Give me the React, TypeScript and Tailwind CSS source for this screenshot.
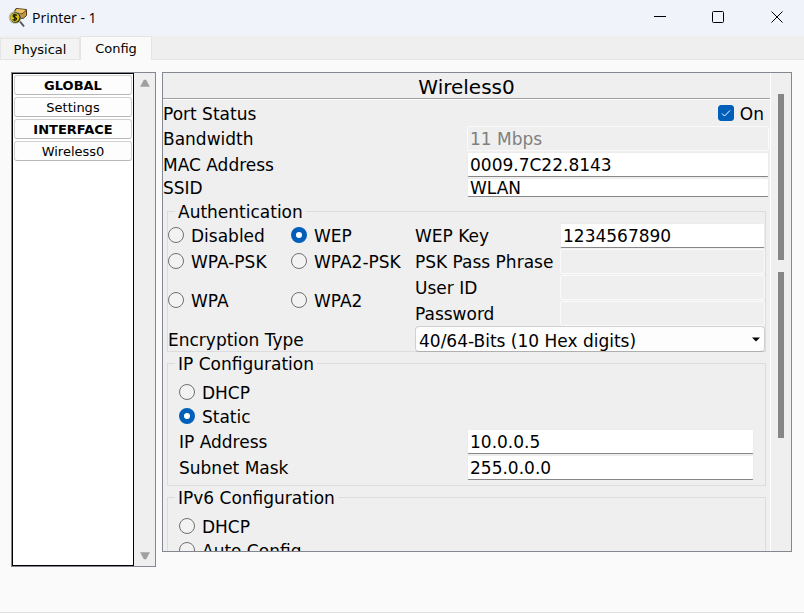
import { useState } from "react";
import type { InputHTMLAttributes, ReactNode } from "react";

const inputBase = "mt-px w-full min-w-0 rounded-[2px] border pl-[2px] outline-none";

function TextBox({ className = "h-[25px] pt-[3px]", ...props }: InputHTMLAttributes<HTMLInputElement>) {
  return (
    <input
      type="text"
      className={`${inputBase} border-[#ececec] border-b-[#868686] bg-white disabled:border-[#fafafa] disabled:bg-[#efefef] disabled:text-[#808080] ${className}`}
      {...props}
    />
  );
}

function FieldLabel({ htmlFor, className = "", children }: { htmlFor: string; className?: string; children: ReactNode }) {
  return (
    <label htmlFor={htmlFor} className={`pt-[2px] leading-[22px] ${className}`}>
      {children}
    </label>
  );
}

function Radio({ name, label, checked, onSelect }: { name: string; label: string; checked: boolean; onSelect: () => void }) {
  return (
    <label className="flex h-6 items-center gap-[7px] whitespace-nowrap">
      <input
        type="radio"
        name={name}
        checked={checked}
        onChange={onSelect}
        className="size-4 shrink-0 appearance-none rounded-full border border-[#707070] bg-[#f3f3f3] checked:border-[5px] checked:border-[#005fb8] checked:bg-white"
      />
      <span className="pt-[3px] leading-[21px]">{label}</span>
    </label>
  );
}

function Group({ title, children }: { title: string; children: ReactNode }) {
  return (
    <fieldset className="mx-1 min-w-0 border border-[#dcdcdc]">
      <legend className="ml-[7px] h-[22px] px-[3px] leading-[24px]">{title}</legend>
      {children}
    </fieldset>
  );
}

function AppIcon() {
  return (
    <svg width="20" height="21" viewBox="0 0 20 21" aria-hidden="true">
      <path d="M6 5 L8 1.500 L18.500 2.500 L18.500 8.500 L15 11.500 L9 11 Z" fill="#c9963e" stroke="#4a3c1c" strokeWidth="1" />
      <path d="M8.500 2 L18 3 L14 6.500 L8 5 Z" fill="#f0c566" />
      <path d="M8 5.500 L14 7 L18 3.500" fill="none" stroke="#6f4a18" strokeWidth="1" />
      <path d="M12 14.500 L16 19.500" stroke="#55564f" strokeWidth="2" />
      <circle cx="7" cy="10.500" r="6.300" fill="#b4c0b4" />
      <circle cx="7.500" cy="10.500" r="5.200" fill="#282c08" />
      <circle cx="6.800" cy="10.500" r="4.600" fill="#dcc012" />
      <path d="M8.800 8.500 C7.300 7 4.800 7.500 5.100 9.200 C5.300 10.500 8.800 10.200 8.600 12 C8.300 13.500 5.800 13.500 4.600 12.300 M6.800 6.800 V14.200" fill="none" stroke="#171700" strokeWidth="1.200" />
    </svg>
  );
}

const sections = [
  { label: "GLOBAL", header: true },
  { label: "Settings", header: false },
  { label: "INTERFACE", header: true },
  { label: "Wireless0", header: false },
];

export default function App() {
  const [auth, setAuth] = useState("WEP");
  const [ip, setIp] = useState("Static");
  const [ipv6, setIpv6] = useState("");

  const authRadio = (label: string) => (
    <Radio name="auth" label={label} checked={auth === label} onSelect={() => setAuth(label)} />
  );

  return (
    <div className="flex h-screen flex-col overflow-hidden border-b border-[#e0e0e0] bg-[#fafafa] font-['DejaVu_Sans',Verdana,sans-serif] text-black">
      <header className="flex h-9 shrink-0 items-center bg-[#f0f3f9] pb-[2px] pl-2">
        <AppIcon />
        <h1 className="ml-1 flex-1 font-['Open_Sans',sans-serif] text-[14px]">Printer - 1</h1>
        <button aria-label="Minimize" className="flex h-[34px] w-[58px] items-center justify-center">
          <svg width="12" height="12"><path d="M0 5.500H12" stroke="#000" /></svg>
        </button>
        <button aria-label="Maximize" className="flex h-[34px] w-[58px] items-center justify-center">
          <svg width="12" height="12"><rect x=".5" y=".5" width="11" height="11" rx="1" fill="none" stroke="#000" /></svg>
        </button>
        <button aria-label="Close" className="mr-[-3px] flex h-[34px] w-[60px] items-center justify-center">
          <svg width="12" height="12"><path d="M.5 .5L11.500 11.500M11.500 .5L.5 11.500" stroke="#000" /></svg>
        </button>
      </header>

      <nav className="flex h-6 shrink-0 items-end bg-[#efefef] text-[13px]">
        <button className="h-[22px] w-20 border border-[#e5e5e5] bg-[#f3f3f3] pt-px">Physical</button>
        <button className="h-6 w-[72px] border border-b-0 border-[#e5e5e5] bg-[#fafafa]">Config</button>
        <div className="h-full flex-1 border-b border-[#e5e5e5]" />
      </nav>

      <main className="flex min-h-0 flex-1 gap-[6px] pt-3 pr-3 pb-[45px] pl-[11px]">
        <aside className="flex w-[145px] shrink-0 border border-[#828790]">
          <div className="flex flex-1 flex-col gap-[2px] border border-black bg-white px-px pt-px text-[13px]">
            {sections.map((s) => (
              <button
                key={s.label}
                className={`h-5 rounded-[3px] border border-[#d0d0d0] border-b-[#b8b8b8] bg-[#fdfdfd] pt-px leading-[18px] ${s.header ? "font-bold" : ""}`}
              >
                {s.label}
              </button>
            ))}
          </div>
          <div className="flex w-[21px] flex-col items-center justify-between bg-[#efefef] py-[6px]">
            <svg width="10" height="8"><path d="M4 1H6L9.500 7.500H.5Z" fill="#a0a0a0" stroke="#a0a0a0" strokeWidth=".5" /></svg>
            <svg width="10" height="8"><path d="M4 7H6L9.500 .5H.5Z" fill="#a0a0a0" stroke="#a0a0a0" strokeWidth=".5" /></svg>
          </div>
        </aside>

        <section className="mb-[15px] flex min-w-0 flex-1 overflow-hidden border border-[#828790] bg-[#efefef] text-[17px]">
          <div className="min-w-0 flex-1">
            <h2 className="h-[27px] border-b border-white text-center text-[20px]">
              <span className="block h-[26px] border-b border-[#a0a0a0] leading-[28px]">Wireless0</span>
            </h2>

            <div className="flex h-[25px] items-center justify-between pr-[6px]">
              <FieldLabel htmlFor="port">Port Status</FieldLabel>
              <span className="flex items-center gap-[6px]">
                <span className="relative flex">
                  <input id="port" type="checkbox" defaultChecked className="peer size-4 appearance-none rounded-[3px] border border-[#707070] checked:border-[#005fb8] checked:bg-[#005fb8]" />
                  <svg width="16" height="16" className="pointer-events-none absolute inset-0 hidden peer-checked:block">
                    <path d="M4 8.500L6.500 11L12 5.500" fill="none" stroke="#fff" />
                  </svg>
                </span>
                <FieldLabel htmlFor="port">On</FieldLabel>
              </span>
            </div>

            <div className="grid grid-cols-[304px_1fr] grid-rows-[26px_26px_20px] items-center pr-px pb-[3px]">
              <FieldLabel htmlFor="bandwidth">Bandwidth</FieldLabel>
              <TextBox id="bandwidth" defaultValue="11 Mbps" disabled />
              <FieldLabel htmlFor="mac">MAC Address</FieldLabel>
              <TextBox id="mac" defaultValue="0009.7C22.8143" />
              <FieldLabel htmlFor="ssid">SSID</FieldLabel>
              <TextBox id="ssid" defaultValue="WLAN" className="h-[19px] pt-[3px]" />
            </div>

            <Group title="Authentication">
              <div className="-mb-px grid grid-cols-[123px_124px_145px_1fr] grid-rows-[26px_26px_26px_26px_26px] items-center whitespace-nowrap">
                {authRadio("Disabled")}
                {authRadio("WEP")}
                <FieldLabel htmlFor="wepkey">WEP Key</FieldLabel>
                <TextBox id="wepkey" defaultValue="1234567890" />
                {authRadio("WPA-PSK")}
                {authRadio("WPA2-PSK")}
                <FieldLabel htmlFor="psk">PSK Pass Phrase</FieldLabel>
                <TextBox id="psk" disabled />
                <div className="row-span-2">{authRadio("WPA")}</div>
                <div className="row-span-2">{authRadio("WPA2")}</div>
                <FieldLabel htmlFor="user">User ID</FieldLabel>
                <TextBox id="user" disabled />
                <FieldLabel htmlFor="password">Password</FieldLabel>
                <TextBox id="password" disabled />
                <FieldLabel htmlFor="encryption" className="col-span-2">Encryption Type</FieldLabel>
                <div className="relative col-span-2">
                  <select id="encryption" className="block h-[26px] w-full appearance-none rounded-[4px] border border-[#d0d0d0] border-b-[#b0b0b0] bg-[#fdfdfd] pt-[2px] pl-[3px] outline-none">
                    <option>40/64-Bits (10 Hex digits)</option>
                  </select>
                  <svg width="8" height="5" className="pointer-events-none absolute top-[11px] right-[5px]"><path d="M0 .5H8L4 4.500Z" fill="#000" /></svg>
                </div>
              </div>
            </Group>

            <Group title="IP Configuration">
              <div className="px-[11px] pt-[6px] pb-[5px]">
                <Radio name="ip" label="DHCP" checked={ip === "DHCP"} onSelect={() => setIp("DHCP")} />
                <Radio name="ip" label="Static" checked={ip === "Static"} onSelect={() => setIp("Static")} />
                <div className="grid auto-rows-[26px] grid-cols-[288px_1fr] items-center">
                  <FieldLabel htmlFor="ipaddr">IP Address</FieldLabel>
                  <TextBox id="ipaddr" defaultValue="10.0.0.5" />
                  <FieldLabel htmlFor="mask">Subnet Mask</FieldLabel>
                  <TextBox id="mask" defaultValue="255.0.0.0" />
                </div>
              </div>
            </Group>

            <Group title="IPv6 Configuration">
              <div className="px-[11px] pt-[6px] pb-[5px]">
                <Radio name="ipv6" label="DHCP" checked={ipv6 === "DHCP"} onSelect={() => setIpv6("DHCP")} />
                <Radio name="ipv6" label="Auto Config" checked={ipv6 === "Auto"} onSelect={() => setIpv6("Auto")} />
              </div>
            </Group>
          </div>

          <div className="flex w-[21px] shrink-0 flex-col items-center gap-3 border-l border-white pt-[21px]">
            <div className="h-[166px] w-[6px] bg-[#868686]" />
            <div className="h-[166px] w-[6px] bg-[#868686]" />
          </div>
        </section>
      </main>
    </div>
  );
}
